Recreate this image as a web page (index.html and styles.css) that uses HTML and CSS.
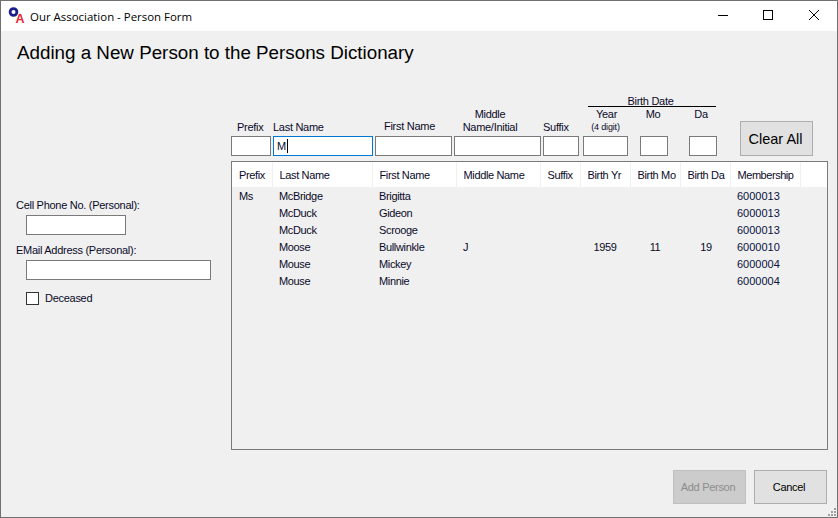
FILE: index.html
```html
<!DOCTYPE html>
<html lang="en">
<head>
<meta charset="utf-8">
<title>Our Association - Person Form</title>
<link rel="stylesheet" href="styles.css">
</head>
<body>
<div class="window">
  <header class="titlebar">
    <svg class="logo" width="18" height="18" viewBox="0 0 18 18">
      <circle cx="5.5" cy="5" r="3.4" fill="none" stroke="#1c1f8c" stroke-width="2.8"/>
      <text x="7.6" y="16" class="logo-a">A</text>
    </svg>
    <span class="title">Our Association - Person Form</span>
    <div class="caption">
      <span class="capbtn"><svg width="12" height="12" viewBox="0 0 12 12"><path d="M0 5.5h10" stroke="#000" fill="none"/></svg></span>
      <span class="capbtn"><svg width="12" height="12" viewBox="0 0 12 12"><rect x="0.5" y="0.5" width="9" height="9" stroke="#000" fill="none"/></svg></span>
      <span class="capbtn"><svg width="12" height="12" viewBox="0 0 12 12"><path d="M1 0l10 10M11 0L1 10" stroke="#000" fill="none"/></svg></span>
    </div>
  </header>
  <h1 class="heading">Adding a New Person to the Persons Dictionary</h1>
  <div class="content">
    <aside class="side">
      <label class="side-label">Cell Phone No. (Personal):</label>
      <div class="input side-phone"></div>
      <label class="side-label email-label">EMail Address (Personal):</label>
      <div class="input side-email"></div>
      <div class="check-row"><span class="checkbox"></span><span>Deceased</span></div>
    </aside>
    <main class="main">
      <div class="filters">
        <div class="field f-prefix"><span class="lab lab-left">Prefix</span><div class="input"></div></div>
        <div class="field f-last"><span class="lab lab-left">Last Name</span><div class="input focus">M<i class="caret"></i></div></div>
        <div class="field f-first"><span class="lab lab-left lab-up">First Name</span><div class="input"></div></div>
        <div class="field f-middle"><span class="lab">Middle<br>Name/Initial</span><div class="input"></div></div>
        <div class="field f-suffix"><span class="lab lab-left">Suffix</span><div class="input"></div></div>
        <div class="birth">
          <div class="birth-title">Birth Date</div>
          <div class="birth-row">
            <div class="field f-year"><span class="lab lab-tight">Year</span><span class="sub">(4 digit)</span><div class="input"></div></div>
            <div class="field f-mo"><span class="lab lab-high">Mo</span><div class="input"></div></div>
            <div class="field f-da"><span class="lab lab-high">Da</span><div class="input"></div></div>
          </div>
        </div>
        <button class="btn clear">Clear All</button>
      </div>
      <div class="grid">
        <table>
          <colgroup>
            <col class="c1"><col class="c2"><col class="c3"><col class="c4"><col class="c5"><col class="c6"><col class="c7"><col class="c8"><col class="c9"><col>
          </colgroup>
          <thead>
            <tr><th>Prefix</th><th>Last Name</th><th>First Name</th><th>Middle Name</th><th>Suffix</th><th>Birth Yr</th><th>Birth Mo</th><th>Birth Da</th><th class="mem-head">Membership</th><th></th></tr>
          </thead>
          <tbody>
            <tr><td>Ms</td><td>McBridge</td><td>Brigitta</td><td></td><td></td><td></td><td></td><td></td><td class="mem">6000013</td><td></td></tr>
            <tr><td></td><td>McDuck</td><td>Gideon</td><td></td><td></td><td></td><td></td><td></td><td class="mem">6000013</td><td></td></tr>
            <tr><td></td><td>McDuck</td><td>Scrooge</td><td></td><td></td><td></td><td></td><td></td><td class="mem">6000013</td><td></td></tr>
            <tr><td></td><td>Moose</td><td>Bullwinkle</td><td>J</td><td></td><td class="num">1959</td><td class="num">11</td><td class="num num-da">19</td><td class="mem">6000010</td><td></td></tr>
            <tr><td></td><td>Mouse</td><td>Mickey</td><td></td><td></td><td></td><td></td><td></td><td class="mem">6000004</td><td></td></tr>
            <tr><td></td><td>Mouse</td><td>Minnie</td><td></td><td></td><td></td><td></td><td></td><td class="mem">6000004</td><td></td></tr>
          </tbody>
        </table>
      </div>
      <div class="footer">
        <button class="btn disabled">Add Person</button>
        <button class="btn cancel">Cancel</button>
      </div>
    </main>
  </div>
  <svg class="grip" width="8" height="8" viewBox="0 0 8 8" fill="#a0a0a0">
    <rect x="6" y="0" width="2" height="2"/><rect x="3" y="3" width="2" height="2"/><rect x="6" y="3" width="2" height="2"/><rect x="0" y="6" width="2" height="2"/><rect x="3" y="6" width="2" height="2"/><rect x="6" y="6" width="2" height="2"/>
  </svg>
</div>
</body>
</html>
```
FILE: styles.css
```css
* { box-sizing: border-box; }
html, body { margin: 0; padding: 0; }
body {
  width: 838px;
  height: 518px;
  overflow: hidden;
  font-family: "Liberation Sans", Arial, sans-serif;
  font-size: 11px;
  letter-spacing: -0.35px;
  color: #0a0a28;
}
.window {
  position: relative;
  width: 838px;
  height: 518px;
  background: #f0f0f0;
  border: 1px solid #707070;
  display: flex;
  flex-direction: column;
}
.titlebar {
  height: 30px;
  background: #fff;
  display: flex;
  align-items: center;
  padding-left: 7px;
  flex: none;
}
.logo { flex: none; }
.logo-a { font: bold 12.5px "Liberation Sans", sans-serif; fill: #e8222e; letter-spacing: 0; }
.title {
  margin-left: 4px;
  font-family: "Open Sans", sans-serif;
  font-size: 11.45px;
  letter-spacing: 0;
  color: #000;
}
.caption { margin-left: auto; display: flex; margin-right: 1px; }
.capbtn { width: 45px; height: 30px; display: flex; align-items: center; justify-content: center; }
.heading {
  margin: 0;
  padding: 11px 0 0 16px;
  height: 60px;
  flex: none;
  font-size: 18.8px;
  font-weight: 400;
  letter-spacing: 0;
  line-height: 21px;
  color: #000;
}
.content { display: flex; flex: 1; }
.side {
  width: 230px;
  flex: none;
  padding: 108px 0 0 15px;
  display: flex;
  flex-direction: column;
  align-items: flex-start;
}
.side-label { line-height: 13px; letter-spacing: -0.28px; }
.email-label { margin-top: 9px; }
.input { background: #fff; border: 1px solid #7a7a7a; height: 20px; }
.side-phone { width: 100px; margin: 3px 0 0 10px; }
.side-email { width: 185px; margin: 3px 0 0 10px; }
.check-row { display: flex; align-items: center; gap: 6px; margin: 12px 0 0 10px; line-height: 13px; letter-spacing: -0.28px; }
.checkbox { width: 13px; height: 13px; background: #fff; border: 1px solid #333; display: block; }
.main { flex: 1; display: flex; flex-direction: column; padding-right: 9px; }
.filters { height: 65px; display: flex; align-items: flex-end; flex: none; letter-spacing: -0.28px; }
.field { display: flex; flex-direction: column; }
.lab { text-align: center; line-height: 13px; padding-bottom: 2px; }
.lab-left { text-align: left; }
.lab-up { padding-bottom: 3px; }
.f-prefix { width: 40px; margin-right: 2px; }
.f-prefix .lab { padding-left: 6px; }
.f-last { width: 100px; margin-right: 2px; }
.f-first { width: 77px; margin-right: 2px; }
.f-first .lab { padding-left: 9px; }
.f-middle { width: 87px; margin-right: 2px; }
.f-middle .lab { padding-right: 16px; margin-right: -1px; white-space: nowrap; }
.f-suffix { width: 36px; margin-right: 4px; }
.focus { border-color: #0078d7; padding-left: 3px; line-height: 18px; display: flex; align-items: center; }
.caret { display: block; width: 1px; height: 14px; background: #000; margin-left: 1px; }
.birth { width: 134px; display: flex; flex-direction: column; }
.birth-title {
  margin-left: 5px;
  width: 128px;
  padding-right: 3px;
  text-align: center;
  line-height: 10px;
  border-bottom: 1px solid #000;
  height: 11px;
}
.birth-row { display: flex; align-items: flex-end; height: 49px; }
.f-year { width: 45px; margin-right: 12px; }
.f-year .lab { padding-left: 2px; }
.f-mo { width: 28px; margin-right: 21px; }
.f-mo .lab { padding-right: 2px; }
.f-da { width: 28px; }
.f-da .lab { padding-right: 4px; }
.lab-tight { padding-bottom: 0; line-height: 14px; }
.sub { text-align: center; font-size: 9px; letter-spacing: -0.15px; line-height: 12px; padding-bottom: 3px; }
.f-mo .lab-high, .f-da .lab-high { padding-bottom: 15px; line-height: 14px; }
.btn {
  font-family: "Liberation Sans", Arial, sans-serif;
  background: #e1e1e1;
  border: 1px solid #adadad;
  color: #000;
  padding: 0;
  letter-spacing: -0.3px;
}
.clear { width: 73px; height: 35px; margin-left: 23px; font-size: 14.5px; letter-spacing: 0; padding: 1px 2px 0 0; }
.grid {
  margin-top: 5px;
  height: 289px;
  flex: none;
  border: 1px solid #7a7a7a;
  overflow: hidden;
}
table { border-collapse: collapse; table-layout: fixed; width: 595px; }
.c1 { width: 40px; } .c2 { width: 100px; } .c3 { width: 84px; } .c4 { width: 84px; }
.c5 { width: 40px; } .c6 { width: 50px; } .c7 { width: 50px; } .c8 { width: 50px; } .c9 { width: 70px; }
th {
  height: 25px;
  padding: 0 0 0 7px;
  background: #fff;
  font-weight: 400;
  text-align: left;
  border-right: 1px solid #f0f0f0;
  white-space: nowrap;
  overflow: hidden;
}
th:last-child { border-right: 0; }
th.mem-head { letter-spacing: -0.45px; }
td { height: 17px; padding: 0 0 0 7px; line-height: 17px; white-space: nowrap; }
tbody tr:first-child td { height: 18px; padding-top: 1px; }
td.num { text-align: center; padding: 0; }
td.num-da { padding-left: 2px; }
td.mem { color: #0a1040; letter-spacing: 0; }
.footer { display: flex; justify-content: flex-end; gap: 8px; margin-top: 20px; padding-right: 1px; }
.footer .btn { width: 73px; height: 34px; font-size: 11px; padding-right: 3px; }
.disabled { background: #cccccc; border-color: #bfbfbf; color: #8c8c8c; }
.grip { position: absolute; right: 1px; bottom: 1px; }
```
